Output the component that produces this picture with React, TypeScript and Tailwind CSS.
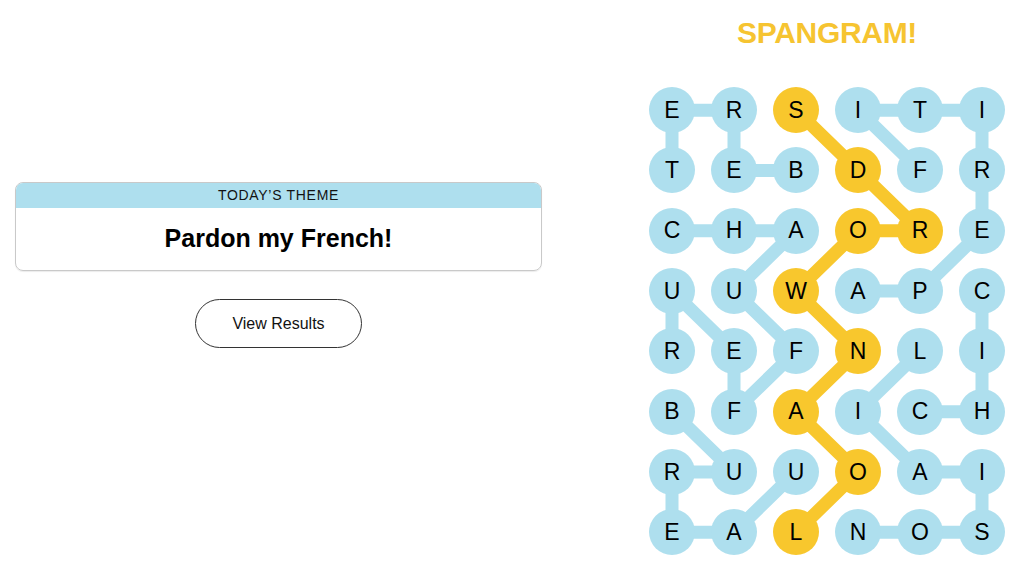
import React from "react";

const LETTERS = [
  "ERSITI",
  "TEBDFR",
  "CHAORE",
  "UUWAPC",
  "REFNLI",
  "BFAICH",
  "RUUOAI",
  "EALNOS",
];

const CELL_W = 62;
const CELL_H = 60.3;

type Cell = [number, number];

// found words as paths of [row, col]
const WORDS: Cell[][] = [
  [[1, 2], [1, 1], [0, 1], [0, 0], [1, 0]], // BERET
  [[3, 3], [3, 4], [2, 5], [1, 5], [0, 5], [0, 4], [0, 3], [1, 4]], // APERITIF
  [[2, 0], [2, 1], [2, 2], [3, 1], [4, 2], [5, 1], [4, 1], [3, 0], [4, 0]], // CHAUFFEUR
  [[5, 0], [6, 1], [6, 0], [7, 0], [7, 1], [6, 2]], // BUREAU
  [[4, 4], [5, 3], [6, 4], [6, 5], [7, 5], [7, 4], [7, 3]], // LIAISON
  [[3, 5], [4, 5], [5, 5], [5, 4]], // CHIC
];

const SPANGRAM: Cell[] = [
  [7, 2], [6, 3], [5, 2], [4, 3], [3, 2], [2, 3], [2, 4], [1, 3], [0, 2],
]; // LOANWORDS

const BLUE = "#aedfee";
const YELLOW = "#f8c72d";

const isSpangram = (r: number, c: number) =>
  SPANGRAM.some(([sr, sc]) => sr === r && sc === c);

const cx = (c: number) => c * CELL_W + CELL_W / 2;
const cy = (r: number) => r * CELL_H + CELL_H / 2;

function Connectors() {
  const lines = (path: Cell[], color: string, key: string) =>
    path.slice(1).map(([r, c], i) => {
      const [pr, pc] = path[i];
      return (
        <line
          key={`${key}-${i}`}
          x1={cx(pc)}
          y1={cy(pr)}
          x2={cx(c)}
          y2={cy(r)}
          stroke={color}
          strokeWidth={13}
          strokeLinecap="round"
        />
      );
    });

  return (
    <svg
      className="absolute inset-0 pointer-events-none"
      width={CELL_W * 6}
      height={CELL_H * 8}
    >
      {WORDS.map((w, i) => lines(w, BLUE, `w${i}`))}
      {lines(SPANGRAM, YELLOW, "s")}
    </svg>
  );
}

function Board() {
  return (
    <div className="relative w-[372px] h-[482.4px]">
      <Connectors />
      <div className="relative grid grid-cols-[repeat(6,62px)] grid-rows-[repeat(8,60.3px)]">
        {LETTERS.map((row, r) =>
          row.split("").map((ch, c) => (
            <div key={`${r}-${c}`} className="flex items-center justify-center">
              <div
                className={`w-[46px] h-[46px] rounded-full flex items-center justify-center text-[23px] text-black ${
                  isSpangram(r, c) ? "bg-[#f8c72d]" : "bg-[#aedfee]"
                }`}
              >
                {ch}
              </div>
            </div>
          ))
        )}
      </div>
    </div>
  );
}

export default function App() {
  return (
    <div
      className="w-[1024px] h-[582px] bg-white flex overflow-hidden"
      style={{ fontFamily: '"Liberation Sans", Arial, sans-serif' }}
    >
      {/* ── Left: theme card ───────────────────────── */}
      <div className="w-[557px] px-[15px] pt-[182px] flex flex-col items-center">
        <div className="w-full rounded-lg border border-[#c9c9c9] overflow-hidden shadow-[0_1px_1px_rgba(0,0,0,0.08)]">
          <div className="bg-[#aedfee] h-[25px] flex items-center justify-center text-[14px] tracking-[0.7px] text-[#121212] uppercase">
            Today’s Theme
          </div>
          <div className="h-[62px] flex items-center justify-center text-[25px] font-bold text-black">
            Pardon my French!
          </div>
        </div>
        <button className="mt-[28px] w-[167px] h-[49px] rounded-full border border-[#333] bg-white text-[16px] text-[#121212]">
          View Results
        </button>
      </div>

      {/* ── Right: board ───────────────────────────── */}
      <div className="ml-[84px] w-[372px] flex flex-col items-center">
        <div className="pt-[15px] h-[51px] leading-[36px] text-[30px] font-semibold text-[#f6c431] tracking-[-0.3px]">
          SPANGRAM!
        </div>
        <div className="mt-[29px]">
          <Board />
        </div>
      </div>
    </div>
  );
}
